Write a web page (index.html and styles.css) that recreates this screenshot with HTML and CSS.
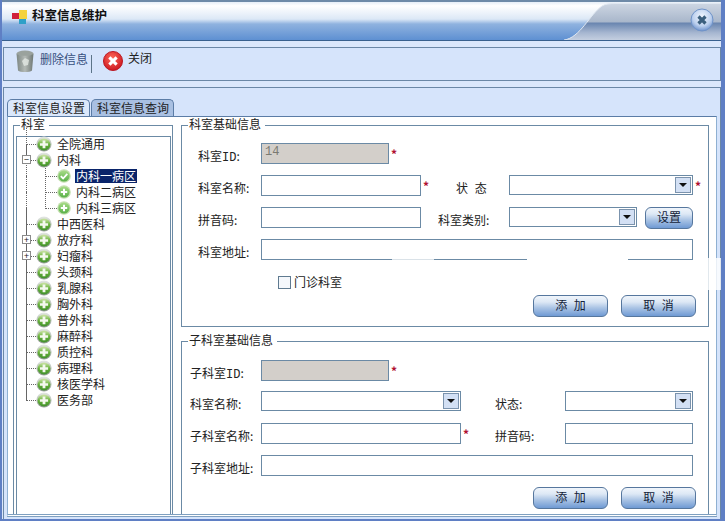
FILE: index.html
```html
<!DOCTYPE html>
<html lang="zh-CN">
<head>
    <meta charset="UTF-8">
    <title>科室信息维护</title>
    <link rel="stylesheet" href="styles.css">
</head>
<body>
<svg class="defs" width="0" height="0">
    <defs>
        <linearGradient id="gGreen" x1="0" y1="0" x2="0" y2="1">
            <stop offset="0" stop-color="#cfe6a8"/>
            <stop offset="0.5" stop-color="#66b03a"/>
            <stop offset="1" stop-color="#3f8f2a"/>
        </linearGradient>
        <linearGradient id="gRing" x1="0" y1="0" x2="0" y2="1">
            <stop offset="0" stop-color="#e4e8e4"/>
            <stop offset="1" stop-color="#8f9a90"/>
        </linearGradient>
        <linearGradient id="gSmall" x1="0" y1="0" x2="0" y2="1">
            <stop offset="0" stop-color="#a8dc88"/>
            <stop offset="1" stop-color="#58b048"/>
        </linearGradient>
        <radialGradient id="gRed" cx="0.45" cy="0.35" r="0.7">
            <stop offset="0" stop-color="#ff6a5a"/>
            <stop offset="1" stop-color="#c8101a"/>
        </radialGradient>
        <linearGradient id="gBin" x1="0" y1="0" x2="1" y2="0">
            <stop offset="0" stop-color="#7c8682"/>
            <stop offset="0.5" stop-color="#b4bab6"/>
            <stop offset="1" stop-color="#6e7773"/>
        </linearGradient>
        <radialGradient id="gClose" cx="0.5" cy="0.35" r="0.7">
            <stop offset="0" stop-color="#f2f7ff"/>
            <stop offset="0.6" stop-color="#bcd0ee"/>
            <stop offset="1" stop-color="#5f86c6"/>
        </radialGradient>
        <linearGradient id="gTabFill" x1="0" y1="0" x2="0" y2="1">
            <stop offset="0" stop-color="#cdd6e3"/>
            <stop offset="0.5" stop-color="#a9b7cb"/>
            <stop offset="0.54" stop-color="#6a86b0"/>
            <stop offset="0.8" stop-color="#a6b6d0"/>
            <stop offset="1" stop-color="#c4cfe0"/>
        </linearGradient>
        <symbol id="plusBig" viewBox="0 0 16 16">
            <ellipse cx="8" cy="8" rx="7.6" ry="7.4" fill="url(#gRing)"/>
            <ellipse cx="8" cy="8.6" rx="6.4" ry="6" fill="url(#gGreen)"/>
            <path d="M6.6 4.6h2.8v2.6h2.7v2.6H9.4v2.5H6.6V9.8H3.9V7.2h2.7z" fill="#f4f8ee"/>
        </symbol>
        <symbol id="plusSmall" viewBox="0 0 14 14">
            <circle cx="7" cy="7" r="6.8" fill="#c4e0b0"/>
            <circle cx="7" cy="7" r="5.6" fill="url(#gSmall)"/>
            <path d="M6 3.8h2v2.2h2.2v2H8v2.2H6V8H3.8V6H6z" fill="#fff"/>
        </symbol>
        <symbol id="checkSmall" viewBox="0 0 14 14">
            <circle cx="7" cy="7" r="6.8" fill="#c4e0b0"/>
            <circle cx="7" cy="7" r="5.6" fill="url(#gSmall)"/>
            <path d="M3.8 7.2l2.3 2.3 4.2-4.6" fill="none" stroke="#fff" stroke-width="1.8"/>
        </symbol>
    </defs>
</svg>

<div class="window">
    <div class="titlebar">
        <svg class="title-icon" width="17" height="15" viewBox="0 0 17 15">
            <rect x="0" y="4" width="7" height="6" fill="#d0203a"/>
            <rect x="7" y="1" width="8" height="9" fill="#f4d23c"/>
            <rect x="7" y="10" width="7" height="5" fill="#2fa0c8"/>
        </svg>
        <span class="title-text">科室信息维护</span>
        <div class="title-tab">
            <svg class="tab-shape" width="157" height="38" viewBox="0 0 157 38">
                <path d="M0 38C16 36 26 12 38 4C41 2 46 1.500 52 1.500H157V38z" fill="url(#gTabFill)"/>
                <path d="M0 38C16 36 26 12 38 4C41 2 46 1.500 52 1.500H157" fill="none" stroke="#e0e8f2"/>
            </svg>
            <svg class="close-btn" width="24" height="24" viewBox="0 0 24 24">
                <circle cx="12" cy="12" r="11" fill="url(#gClose)" stroke="#6f93c8"/>
                <path d="M8.500 8.500l7 7M15.500 8.500l-7 7" stroke="#3b5f7e" stroke-width="3.200"/>
            </svg>
        </div>
    </div>

    <div class="toolbar">
        <div class="tool tool-delete">
            <svg width="18" height="23" viewBox="0 0 18 23">
                <ellipse cx="9" cy="3.500" rx="8.500" ry="3" fill="#9aa29d"/>
                <path d="M.5 3.500L2 20.500c2 2 12 2 14 0L17.500 3.500c-2 3-15 3-17 0z" fill="url(#gBin)"/>
                <path d="M6 11l3-3 4 2-1 5-4 1z" fill="#e4e8e4" opacity="0.8"/>
            </svg>
            <span>删除信息</span>
        </div>
        <div class="tool-sep"></div>
        <div class="tool tool-close">
            <svg width="20" height="20" viewBox="0 0 22 22">
                <circle cx="11" cy="11" r="10.500" fill="url(#gRed)" stroke="#b8101c"/>
                <path d="M7 7l8 8M15 7l-8 8" stroke="#fff" stroke-width="3.400"/>
            </svg>
            <span>关闭</span>
        </div>
    </div>

    <div class="content">
        <div class="tabs">
            <div class="tab tab-on">科室信息设置</div>
            <div class="tab">科室信息查询</div>
        </div>
        <div class="page">
            <div class="group dept">
                <span class="legend">科室</span>
                <ul class="tree">
                    <li class="top"><svg class="ico"><use href="#plusBig"/></svg>全院通用</li>
                    <li class="top"><i class="box">−</i><svg class="ico"><use href="#plusBig"/></svg>内科</li>
                    <li class="sub"><svg class="ico-s"><use href="#checkSmall"/></svg><b class="picked">内科一病区</b></li>
                    <li class="sub"><svg class="ico-s"><use href="#plusSmall"/></svg>内科二病区</li>
                    <li class="sub last"><svg class="ico-s"><use href="#plusSmall"/></svg>内科三病区</li>
                    <li class="top"><svg class="ico"><use href="#plusBig"/></svg>中西医科</li>
                    <li class="top"><i class="box">+</i><svg class="ico"><use href="#plusBig"/></svg>放疗科</li>
                    <li class="top"><i class="box">+</i><svg class="ico"><use href="#plusBig"/></svg>妇瘤科</li>
                    <li class="top"><svg class="ico"><use href="#plusBig"/></svg>头颈科</li>
                    <li class="top"><svg class="ico"><use href="#plusBig"/></svg>乳腺科</li>
                    <li class="top"><svg class="ico"><use href="#plusBig"/></svg>胸外科</li>
                    <li class="top"><svg class="ico"><use href="#plusBig"/></svg>普外科</li>
                    <li class="top"><svg class="ico"><use href="#plusBig"/></svg>麻醉科</li>
                    <li class="top"><svg class="ico"><use href="#plusBig"/></svg>质控科</li>
                    <li class="top"><svg class="ico"><use href="#plusBig"/></svg>病理科</li>
                    <li class="top"><svg class="ico"><use href="#plusBig"/></svg>核医学科</li>
                    <li class="top end"><svg class="ico"><use href="#plusBig"/></svg>医务部</li>
                </ul>
            </div>

            <div class="forms">
                <div class="group base">
                    <span class="legend">科室基础信息</span>
                    <div class="row r-id">
                        <label class="lb">科室<span class="mono">ID</span>:</label>
                        <div class="field off w-id">14</div><em class="req">*</em>
                    </div>
                    <div class="row">
                        <label class="lb">科室名称:</label>
                        <div class="field w-mid"></div><em class="req">*</em>
                        <label class="lb-state">状 态</label>
                        <div class="field sel w-state"><i class="arrow"></i></div><em class="req">*</em>
                    </div>
                    <div class="row">
                        <label class="lb">拼音码:</label>
                        <div class="field w-mid"></div>
                        <label class="lb-type">科室类别:</label>
                        <div class="field sel w-type"><i class="arrow"></i></div>
                        <div class="btn btn-set">设置</div>
                    </div>
                    <div class="row">
                        <label class="lb">科室地址:</label>
                        <div class="field w-full"></div>
                    </div>
                    <div class="check-row"><i class="check"></i>门诊科室</div>
                    <div class="btn-row">
                        <div class="btn">添 加</div>
                        <div class="btn">取 消</div>
                    </div>
                </div>

                <div class="group child">
                    <span class="legend">子科室基础信息</span>
                    <div class="row r-id">
                        <label class="lb">子科室<span class="mono">ID</span>:</label>
                        <div class="field off w-id"></div><em class="req">*</em>
                    </div>
                    <div class="row">
                        <label class="lb">科室名称:</label>
                        <div class="field sel w-long"><i class="arrow"></i></div>
                        <label class="lb-right lb-gap">状态:</label>
                        <div class="field sel w-short"><i class="arrow"></i></div>
                    </div>
                    <div class="row">
                        <label class="lb">子科室名称:</label>
                        <div class="field w-long"></div><em class="req">*</em>
                        <label class="lb-right">拼音码:</label>
                        <div class="field w-short"></div>
                    </div>
                    <div class="row">
                        <label class="lb">子科室地址:</label>
                        <div class="field w-full"></div>
                    </div>
                    <div class="btn-row">
                        <div class="btn">添 加</div>
                        <div class="btn">取 消</div>
                    </div>
                </div>
            </div>
        </div>
    </div>

    <!-- white smudges that sit over the borders in the original capture -->
    <div class="smudge s1"></div>
    <div class="smudge s2"></div>
    <div class="smudge s3"></div>
</div>
</body>
</html>
```

FILE: styles.css
```css
* {
    box-sizing: border-box;
}

html, body {
    margin: 0;
    padding: 0;
}

body {
    width: 725px;
    height: 521px;
    overflow: hidden;
    font-family: "Noto Sans CJK SC", "Liberation Sans", sans-serif;
    font-size: 12px;
    color: #1a1a1a;
    background: #5f7fc4;
}

.defs {
    position: absolute;
}

.window {
    position: relative;
    width: 725px;
    height: 521px;
    background: #dbe7fb;
    border-left: 2px solid #5f7fc4;
    border-right: 4px solid #5f7fc4;
    border-bottom: 2px solid #5f7fc4;
}

/* title bar */
.titlebar {
    display: flex;
    align-items: flex-start;
    height: 41px;
    border-top: 2px solid #6e8aa8;
    border-bottom: 1px solid #39608e;
    background: linear-gradient(180deg, #e6eef8 0%, #ffffff 10%, #dce8f6 45%, #8fb2df 58%, #5e90d2 100%);
}

.title-icon {
    margin: 7px 0 0 10px;
}

.title-text {
    margin: 3px 0 0 3px;
    font-size: 12.5px;
    font-weight: 700;
    color: #111;
}

.title-tab {
    position: relative;
    margin-left: auto;
    height: 38px;
}

.tab-shape {
    display: block;
}

.close-btn {
    position: absolute;
    top: 6px;
    right: 7px;
}

/* toolbar */
.toolbar {
    display: flex;
    align-items: flex-start;
    height: 34px;
    margin: 6px 0 0 1px;
    border: 1px solid #6b87a6;
    background: #d6e4fb;
}

.tool {
    display: flex;
    align-items: flex-start;
    color: #222;
}

.tool span {
    line-height: 14px;
}

.tool-delete {
    margin: 2px 0 0 12px;
    color: #36507e;
}

.tool-delete span {
    margin: 2px 0 0 6px;
}

.tool-sep {
    width: 1px;
    height: 18px;
    margin: 7px 0 0 3px;
    background: #5c7488;
}

.tool-close {
    margin: 3px 0 0 11px;
}

.tool-close span {
    margin: 0 0 0 5px;
}

/* main panel */
.content {
    display: flex;
    flex-direction: column;
    height: 432px;
    margin: 6px 0 0 1px;
    padding: 11px 3px 0 3px;
    border: 1px solid #6b87a6;
    border-bottom: 0;
    background: #d6e4fb;
}

.tabs {
    display: flex;
    flex: none;
    height: 17px;
    gap: 1px;
}

.tab {
    height: 17px;
    padding: 0 4px 0 5px;
    line-height: 16px;
    border: 1px solid #5b7ca6;
    border-bottom: 0;
    border-radius: 5px 5px 0 0;
    background: #a9c0e2;
    color: #222;
}

.tab-on {
    background: #dbe8fb;
}

.page {
    display: flex;
    flex: none;
    height: 401px;
    padding: 8px 0 0 5px;
    gap: 8px;
    background: #fff;
    border: 1px solid #8fb0d2;
    border-top: 1px solid #5b7ca6;
    border-bottom: 3px double #7fa0c0;
}

/* fieldset look */
.group {
    position: relative;
    flex: none;
    border: 1px solid #6b8aa5;
}

.legend {
    position: absolute;
    top: -9px;
    left: 6px;
    padding: 0 4px 0 1px;
    line-height: 14px;
    background: #fff;
    color: #222;
}

.dept {
    width: 160px;
    height: 389px;
    border-bottom: 0;
    padding: 10px 1px 0 2px;
}

.forms {
    display: flex;
    flex: none;
    flex-direction: column;
    width: 528px;
    gap: 14px;
}

.base {
    height: 202px;
    padding: 17px 0 0 16px;
}

.child {
    height: 173px;
    padding: 18px 0 0 8px;
    border-bottom: 0;
}

/* tree */
.tree {
    list-style: none;
    width: 155px;
    height: 378px;
    margin: 0;
    padding: 0;
    border: 1px solid #6b8aa5;
    border-bottom: 0;
}

.tree li {
    position: relative;
    display: flex;
    align-items: center;
    height: 16px;
    padding-bottom: 2px;
    line-height: 16px;
    white-space: nowrap;
    color: #222;
}

.top {
    padding-left: 19px;
}

.sub {
    padding-left: 40px;
}

/* dotted connectors */
.tree li::before {
    content: "";
    position: absolute;
    left: 9px;
    top: -9px;
    width: 9px;
    height: 16px;
    border-left: 1px dotted #666;
    border-bottom: 1px dotted #666;
}

.tree li::after {
    content: "";
    position: absolute;
    left: 9px;
    top: 7px;
    height: 16px;
    border-left: 1px dotted #666;
}

.tree .end::after {
    display: none;
}

.tree .sub::before {
    left: 28px;
    width: 11px;
}

.tree .last::after {
    top: -9px;
    height: 32px;
}

.ico {
    position: relative;
    z-index: 1;
    flex: none;
    width: 16px;
    height: 16px;
    margin-right: 5px;
}

.ico-s {
    position: relative;
    z-index: 1;
    flex: none;
    width: 14px;
    height: 14px;
    margin-right: 5px;
}

.box {
    position: absolute;
    z-index: 2;
    left: 5px;
    top: 2px;
    width: 9px;
    height: 9px;
    border: 1px solid #8a8a8a;
    background: #fff;
    font-style: normal;
    font-size: 9px;
    line-height: 7px;
    text-align: center;
    color: #222;
}

.picked {
    margin-left: -1px;
    padding: 0 1px;
    font-weight: 400;
    line-height: 14px;
    color: #fff;
    background: #0a246a;
}

/* form rows */
.row {
    display: flex;
    align-items: flex-start;
    height: 21px;
    margin-bottom: 11px;
}

.child .r-id {
    margin-bottom: 10px;
}

.lb {
    flex: none;
    width: 63px;
    padding-top: 6px;
    line-height: 14px;
    white-space: nowrap;
    color: #222;
}

.child .lb {
    width: 71px;
}

.mono {
    font-family: "Liberation Mono", monospace;
}

.field {
    position: relative;
    flex: none;
    height: 21px;
    padding: 0 3px;
    font-family: "Liberation Mono", monospace;
    line-height: 16px;
    border: 1px solid #6b8aa5;
    background: #fff;
    color: #7a7a72;
}

.off {
    background: #d3cfca;
}

.w-id { width: 128px; }
.w-mid { width: 160px; }
.w-long { width: 200px; }
.w-full { width: 432px; }
.w-state { width: 184px; }
.w-type { width: 128px; }
.w-short { width: 128px; }

.sel {
    height: 20px;
}

.arrow {
    position: absolute;
    top: 1px;
    right: 1px;
    width: 16px;
    height: 16px;
    border: 1px solid #7b93ad;
    background: #d3e0f4;
}

.arrow::after {
    content: "";
    position: absolute;
    left: 3px;
    top: 5px;
    border-left: 4px solid transparent;
    border-right: 4px solid transparent;
    border-top: 4px solid #111;
}

.req {
    flex: none;
    width: 8px;
    margin: 4px 0 0 2px;
    font-style: normal;
    font-weight: 700;
    line-height: 14px;
    color: #b01030;
}

.lb-state {
    width: 45px;
    margin: 0 8px 0 25px;
    padding-top: 6px;
    line-height: 14px;
    word-spacing: 4px;
    color: #222;
}

.lb-type {
    width: 71px;
    margin-left: 17px;
    padding-top: 6px;
    line-height: 14px;
    color: #222;
}

.lb-right {
    width: 70px;
    margin-left: 24px;
    padding-top: 6px;
    line-height: 14px;
    color: #222;
}

.lb-gap {
    margin-left: 34px;
}

.check-row {
    display: flex;
    align-items: center;
    gap: 3px;
    height: 14px;
    margin: 15px 0 0 80px;
    line-height: 14px;
    color: #222;
}

.check {
    width: 13px;
    height: 13px;
    border: 1px solid #5f7a90;
    background: #f4f7fb;
}

/* buttons */
.btn {
    flex: none;
    width: 75px;
    height: 22px;
    line-height: 18px;
    text-align: center;
    word-spacing: 4px;
    border: 1px solid #56779e;
    border-radius: 6px;
    color: #14233a;
    background: linear-gradient(180deg, #f0f5fb 0%, #dde8f5 30%, #a9c3e4 60%, #6f9ad4 100%);
}

.btn-set {
    width: 48px;
    margin-left: 8px;
}

.btn-row {
    display: flex;
    justify-content: flex-end;
    gap: 13px;
    padding-right: 12px;
}

.base .btn-row {
    margin-top: 6px;
}

.smudge {
    position: absolute;
    background: #fff;
}

.s1 {
    left: 390px;
    top: 257px;
    width: 42px;
    height: 5px;
    opacity: 0.75;
}

.s2 {
    left: 525px;
    top: 257px;
    width: 101px;
    height: 5px;
}

.s3 {
    left: 705px;
    top: 258px;
    width: 14px;
    height: 32px;
    opacity: 0.8;
}
```
